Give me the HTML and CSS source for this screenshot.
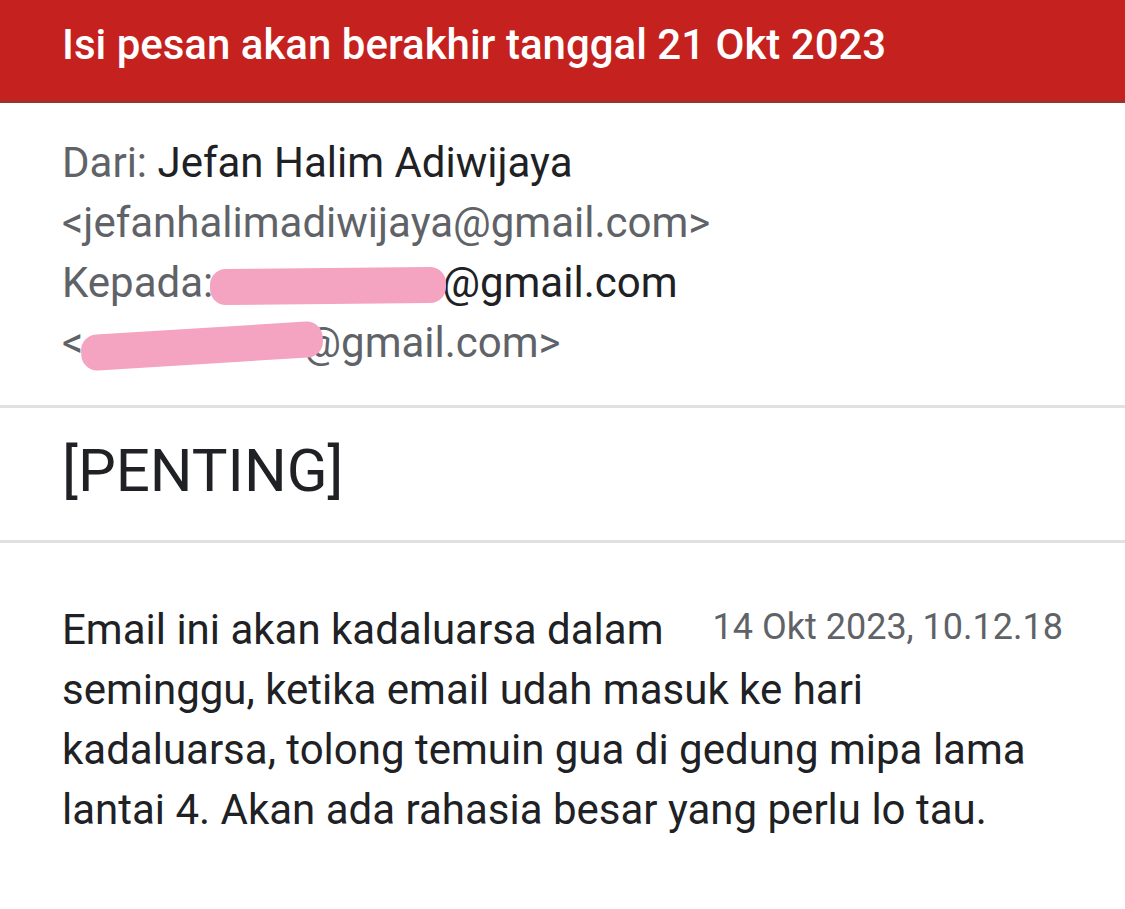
FILE: index.html
```html
<!DOCTYPE html>
<html lang="id">
<head>
<meta charset="utf-8">
<title>Email</title>
<link rel="stylesheet" href="styles.css">
</head>
<body>
<header class="banner">Isi pesan akan berakhir tanggal 21 Okt 2023</header>
<section class="meta">
  <div class="line"><span class="label">Dari:</span> <span class="val">Jefan Halim Adiwijaya</span></div>
  <div class="line label">&lt;jefanhalimadiwijaya@gmail.com&gt;</div>
  <div class="line"><span class="label">Kepada:</span><span class="redact r1"></span><span class="val">@gmail.com</span></div>
  <div class="line label">&lt;<span class="redact r2"></span>@gmail.com&gt;</div>
</section>
<section class="subject">[PENTING]</section>
<section class="body">
  <span class="time">14 Okt 2023, 10.12.18</span>
  Email ini akan kadaluarsa dalam seminggu, ketika email udah masuk ke hari kadaluarsa, tolong temuin gua di gedung mipa lama lantai 4. Akan ada rahasia besar yang perlu lo tau.
</section>
</body>
</html>
```
FILE: styles.css
```css
html, body {
  margin: 0;
  padding: 0;
  background: #fff;
  font-family: Roboto, "Noto Sans", sans-serif;
}
.banner {
  background: #c5221f;
  color: #fff;
  font-weight: 500;
  font-size: 42px;
  line-height: 60px;
  height: 103px;
  box-sizing: border-box;
  padding: 15px 0 0 62px;
  border-bottom: 3px solid #a0302c;
  white-space: nowrap;
}
.meta {
  padding: 30px 62px 32px;
  font-size: 42px;
  border-bottom: 3px solid #e1e1e1;
}
.line {
  height: 60px;
  line-height: 60px;
  white-space: nowrap;
}
.label { color: #5f6368; }
.val { color: #202124; }
.redact {
  display: inline-block;
  position: relative;
  z-index: 1;
  background: #f4a3c0;
  border-radius: 16px;
  vertical-align: middle;
}
.r1 {
  width: 236px;
  height: 36px;
  margin-left: -3px;
  margin-right: -4px;
  transform: rotate(-0.6deg);
}
.r2 {
  width: 242px;
  height: 36px;
  margin-left: -2px;
  margin-right: -20px;
  transform: rotate(-3.5deg);
}
.subject {
  padding: 0 62px 6px;
  height: 135px;
  box-sizing: border-box;
  line-height: 126px;
  font-size: 60px;
  color: #202124;
  border-bottom: 3px solid #e1e1e1;
}
.body {
  padding: 57px 62px 0;
  font-size: 42px;
  line-height: 60px;
  color: #202124;
}
.time {
  float: right;
  font-size: 36px;
  color: #5f6368;
  line-height: 54px;
  margin-left: 40px;
}
```
